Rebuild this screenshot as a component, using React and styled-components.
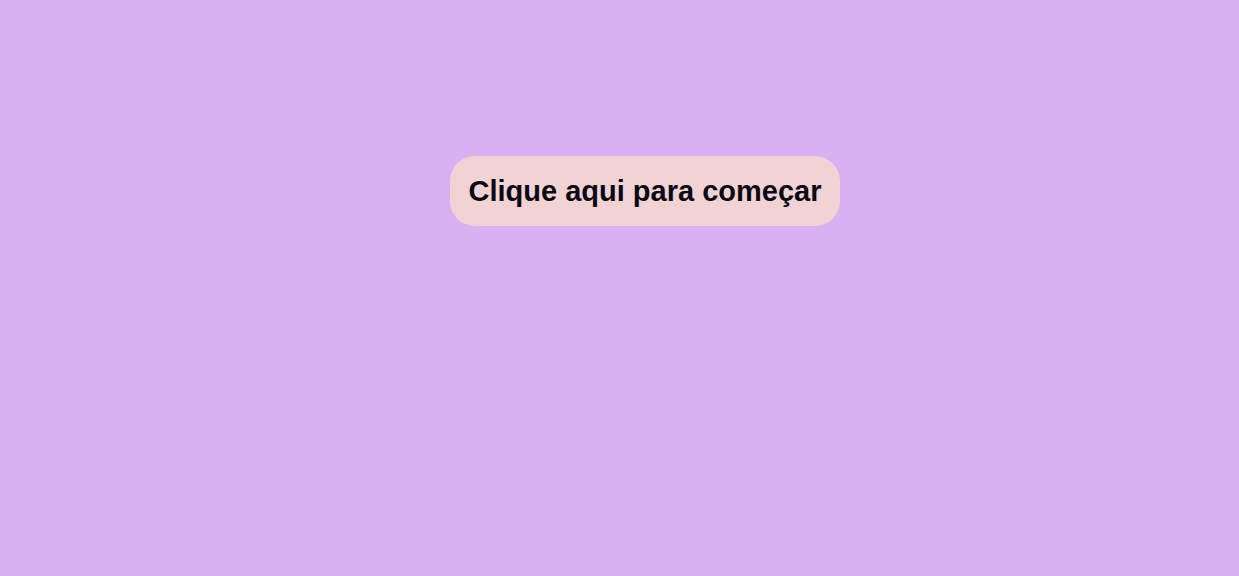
import React from 'react';
import styled, {createGlobalStyle} from 'styled-components';

const GlobalStyle = createGlobalStyle`
    html, body {
        margin: 0;
        padding: 0;
        background: #d8b1f2;
    }
`;

const Whole = styled.div`
    width: 100%;
    min-height: 576px;
    box-sizing: border-box;
    padding: 156px 0 0 450px;

    display: flex;
    align-items: flex-start;
`;

const StartBtn = styled.button`
    width: 390px;
    height: 70px;
    padding: 0;
    border: none;
    border-radius: 25px;
    background: #f2d3d4;

    font-family: 'Liberation Sans', Arial, sans-serif;
    font-weight: bold;
    font-size: 29px;
    color: #0a0a14;
    text-align: center;
    cursor: pointer;
`;

function App(){
    return(<>
        <GlobalStyle />
        <Whole>
            <StartBtn>Clique aqui para começar</StartBtn>
        </Whole>
    </>);
}

export default App;
